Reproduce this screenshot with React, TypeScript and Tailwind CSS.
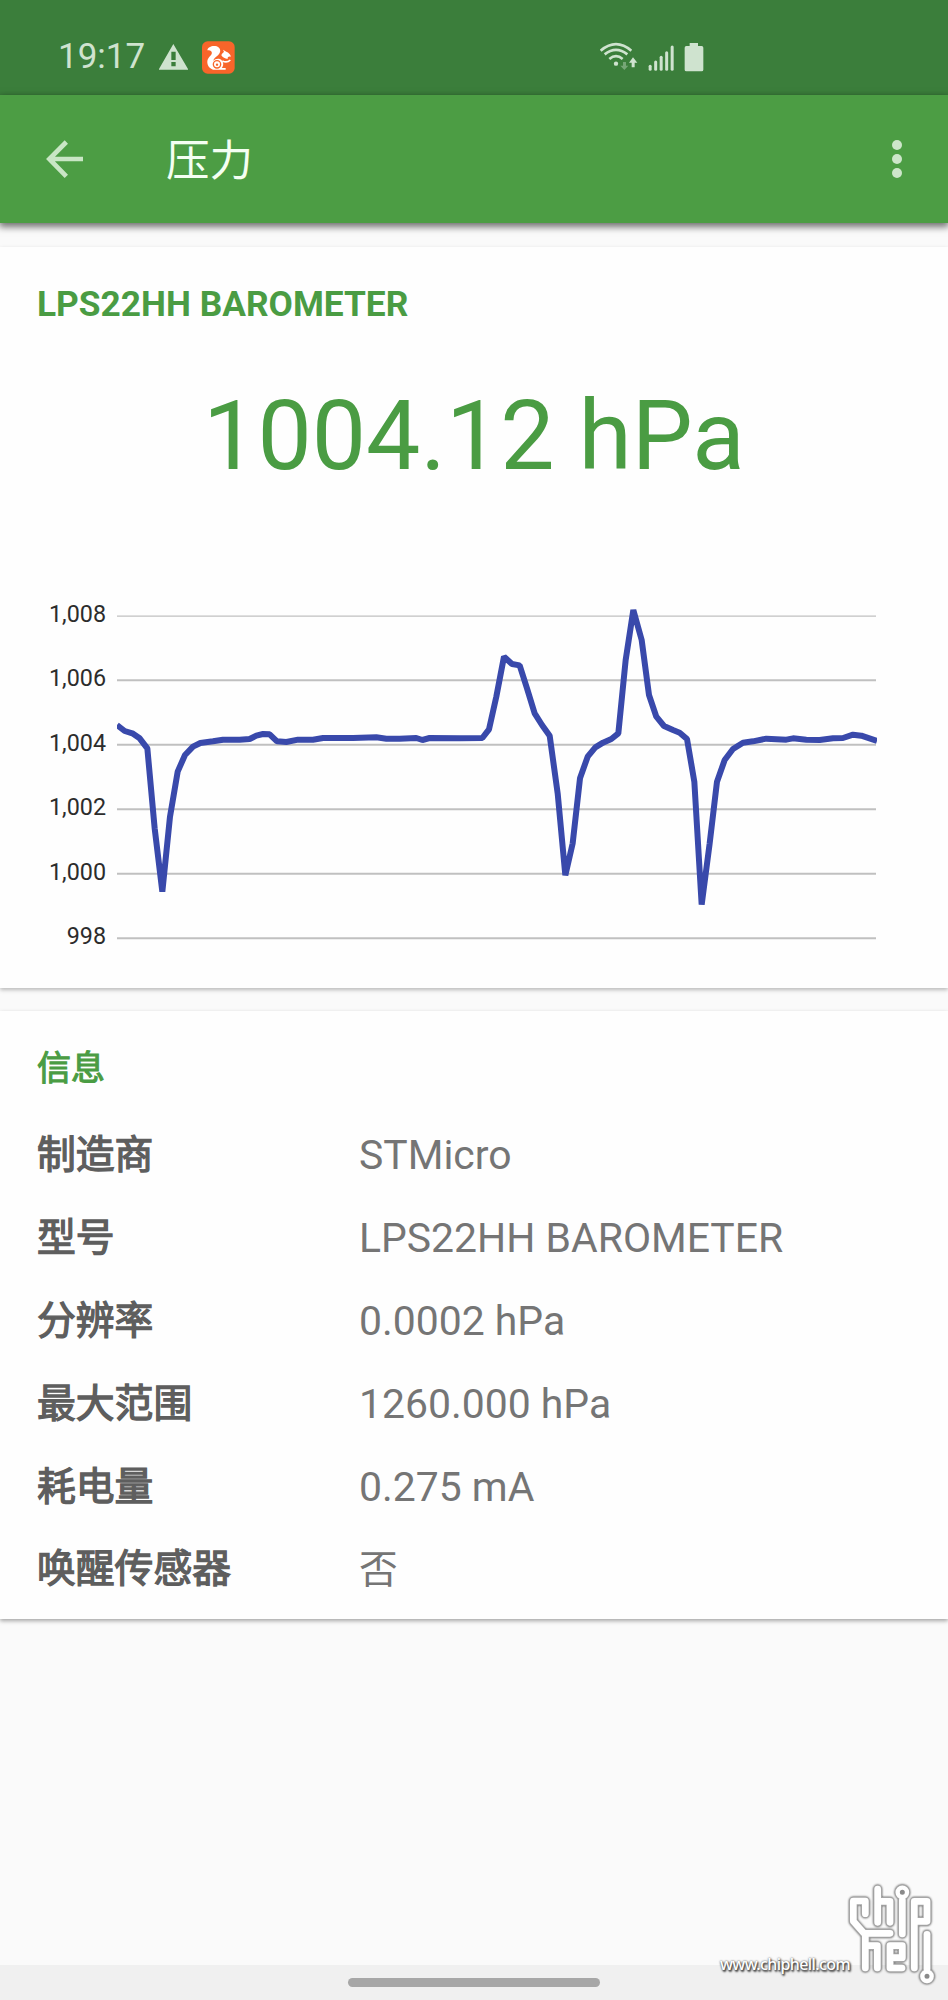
import React from "react";

const ticks = ["1,008", "1,006", "1,004", "1,002", "1,000", "998"];

const series =
  "352,435 375,453 398,460 420,475 443,505 465,745 488,935 511,710 534,575 556,525 580,500 602,489 640,484 670,479 720,479 750,477 770,467 790,462 810,463 832,484 860,486 895,479 940,479 970,474 1060,474 1130,472 1160,476 1200,476 1250,474 1268,480 1290,474 1380,475 1448,474 1468,448 1490,350 1513,230 1537,252 1560,256 1582,325 1605,400 1627,435 1650,467 1674,640 1697,886 1719,790 1741,595 1764,530 1787,502 1810,488 1835,477 1856,460 1878,240 1901,90 1926,180 1948,345 1970,410 1993,438 2020,450 2040,458 2062,477 2084,605 2106,974 2130,790 2152,605 2175,540 2200,507 2230,488 2260,484 2300,476 2360,479 2380,475 2420,479 2460,480 2500,475 2530,474 2560,464 2585,467 2632,483";

const info: [string, string][] = [
  ["制造商", "STMicro"],
  ["型号", "LPS22HH BAROMETER"],
  ["分辨率", "0.0002 hPa"],
  ["最大范围", "1260.000 hPa"],
  ["耗电量", "0.275 mA"],
  ["唤醒传感器", "否"],
];

function StatusBar() {
  return (
    <div className="flex h-[95px] shrink-0 items-center bg-[#3b7e3b] pt-[19px] pl-[58px] text-[#cfe3cf]">
      <span className="w-[101px] text-[35px] leading-[34px]">19:17</span>
      <svg className="h-[26px] w-[29px]" viewBox="478 131 87 78">
        <path
          fill="currentColor"
          fillRule="evenodd"
          d="M521 131 L566 208 H477 Z M515 154 V179 H528 V154 Z M515 185 V198 H528 V185 Z"
        />
      </svg>
      <svg className="ml-[14px] h-[33px] w-[33px]" viewBox="605 121 99 99">
        <rect x="605" y="122" width="98" height="97" rx="17" fill="#f8652a" />
        <path
          fill="#fff"
          d="M621 149 C622 138 638 133 649 137 C662 142 663 155 653 164 C645 171 640 174 639 181 C645 173 659 172 665 180 C671 187 669 197 664 202 H676 V207 H638 C627 204 620 193 621 182 C622 171 631 166 634 160 C637 152 629 148 621 149 Z"
        />
        <path fill="#fff" d="M663 164 C665 158 668 156 671 154 L668 147 L678 153 C685 155 690 161 692 168 C684 166 681 170 682 175 C674 173 667 171 663 164 Z" />
        <path fill="none" stroke="#fff" strokeWidth="5" d="M666 181 C674 185 684 184 690 178" />
        <circle cx="650" cy="191" r="11" fill="none" stroke="#f8652a" strokeWidth="4" />
        <circle cx="650" cy="192" r="3.5" fill="#f8652a" />
      </svg>
      <svg className="ml-[365px] h-[30px] w-[104px]" viewBox="120 124 312 90">
        <g fill="none" stroke="currentColor" strokeWidth="8">
          <path d="M122 150 Q168 111 214 150" />
          <path d="M134 161 Q168 134 202 161" />
          <path d="M148 175 Q168 158 188 175" />
        </g>
        <circle cx="168" cy="189" r="6.5" fill="currentColor" />
        <path fill="currentColor" opacity="0.4" d="M189 184 H198 V195 H205 L193 208 L181 195 H189 Z" />
        <path fill="currentColor" d="M219 170 L232 186 H224 V200 H215 V186 H207 Z" />
        <g stroke="currentColor" strokeWidth="9" strokeLinecap="round">
          <path d="M270.5 197 V206" />
          <path d="M287 184 V206" />
          <path d="M303.500 170 V206" />
          <path d="M320 156 V206" />
          <path d="M336.500 139 V206" />
        </g>
        <path
          fill="currentColor"
          d="M389 127 H414 V136 H425 Q430 136 430 141 V207 Q430 212 425 212 H379 Q374 212 374 207 V141 Q374 136 379 136 H389 Z"
        />
      </svg>
    </div>
  );
}

function AppBar() {
  return (
    <header className="relative z-10 flex h-[128px] shrink-0 items-center bg-[#4c9d44] pl-[46px] shadow-[0_3px_7px_1px_rgba(0,0,0,0.55)]">
      <svg className="h-[38px] w-[38px]" viewBox="138 421 114 114" fill="none" stroke="#c9e6c5" strokeWidth="14">
        <path d="M249 478 H148 M199 427 L148 478 L199 530" />
      </svg>
      <h1 className="mt-[5px] ml-[82px] flex-1 text-[43.500px] leading-[50px] font-normal text-[#f4fff2]">压力</h1>
      <div className="mr-[46px] flex flex-col gap-[4px]">
        <span className="h-[10px] w-[10px] rounded-full bg-[#cde6ca]" />
        <span className="h-[10px] w-[10px] rounded-full bg-[#cde6ca]" />
        <span className="h-[10px] w-[10px] rounded-full bg-[#cde6ca]" />
      </div>
    </header>
  );
}

function Chart() {
  return (
    <div className="mt-[106px] flex h-[370px]">
      <div className="-mt-[18px] w-[106px] text-right text-[23.300px] leading-[64.400px] text-[#2c2c2c]">
        {ticks.map((t) => (
          <div key={t} className="h-[64.400px]">
            {t}
          </div>
        ))}
      </div>
      <svg className="ml-[11.300px] h-[360px] w-[760px]" viewBox="352 60 2280 1080">
        <g stroke="#c0c0c0" strokeWidth="6">
          <path d="M352 108.500 H2629" strokeWidth="4" />
          <path d="M352 300.500 H2629" />
          <path d="M352 494 H2629" />
          <path d="M352 687.500 H2629" />
          <path d="M352 881 H2629" />
          <path d="M352 1074.500 H2629" />
        </g>
        <polyline points={series} fill="none" stroke="#3949ab" strokeWidth="18" strokeLinejoin="bevel" />
      </svg>
    </div>
  );
}

function Watermark() {
  return (
    <div className="absolute right-[13px] bottom-[11px] flex items-end">
      <span className="mb-[14px] font-['Noto_Sans',sans-serif] text-[16px] leading-[22px] font-medium tracking-[-0.6px] text-white [text-shadow:1px_1px_2px_#444,0_0_2px_#555,1px_2px_2px_#666]">
        www.chiphell.com
      </span>
      <svg
        className="-mr-[3px] ml-[-6px] h-[108px] w-[94px] drop-shadow-[0_0_1px_rgba(0,0,0,0.7)]"
        viewBox="434 36 282 324"
        fill="none"
        strokeLinejoin="round"
      >
        {[
          { color: "#a6a6a6", width: 26, ring: 19 },
          { color: "#ffffff", width: 20, ring: 13 },
        ].map((s) => (
          <g key={s.color} stroke={s.color} strokeWidth={s.width} strokeLinecap="round">
            <path d="M498 134 V96 H462 V157 L494 193 H572" />
            <path d="M498 193 V297 M498 230 H534 V297" />
            <path d="M535 60 V160 M535 97 H572 V160" />
            <path d="M609 94 V195" />
            <path d="M645 297 V97 H683 V157 H645" />
            <path d="M572 266 H609 V230 H572 V297 H608" />
            <path d="M683 196 V299" />
            <circle cx="609" cy="70" r="14" strokeWidth={s.ring} fill="#8a8a8a" />
            <circle cx="683" cy="322" r="14" strokeWidth={s.ring} fill="#8a8a8a" />
          </g>
        ))}
      </svg>
    </div>
  );
}

export default function App() {
  return (
    <div className="relative flex h-[2000px] w-[948px] flex-col overflow-hidden bg-[#fafafa] font-[Roboto,'Noto_Sans_CJK_SC',sans-serif]">
      <StatusBar />
      <AppBar />
      <section className="mt-[24px] h-[741px] shrink-0 bg-[#fefefe] shadow-[0_2px_4px_rgba(0,0,0,0.26)]">
        <h2 className="pt-[36px] pl-[37px] text-[35.300px] leading-[42px] font-bold text-[#4a9c43]">
          LPS22HH BAROMETER
        </h2>
        <p className="mt-[53px] text-center text-[96.700px] leading-[116px] text-[#4a9c43]">1004.12 hPa</p>
        <Chart />
      </section>
      <section className="mt-[23px] h-[608px] shrink-0 bg-[#fefefe] pl-[37px] shadow-[0_2px_4px_rgba(0,0,0,0.34)]">
        <h2 className="pt-[36px] text-[34px] leading-[42px] text-[#4a9c43] [-webkit-text-stroke:1.1px_#4a9c43]">信息</h2>
        <dl className="mt-[25px]">
          {info.map(([label, value]) => (
            <div key={label} className="flex h-[82.800px] items-center leading-[50px]">
              <dt className="w-[322px] text-[38.800px] text-[#5e5e5e] [-webkit-text-stroke:1.3px_#5e5e5e]">{label}</dt>
              <dd className={value === "否" ? "pt-[2px] text-[38.700px] text-[#757575]" : "text-[40.900px] text-[#757575]"}>
                {value}
              </dd>
            </div>
          ))}
        </dl>
      </section>
      <div className="flex-1" />
      <div className="flex h-[35px] shrink-0 justify-center bg-[#f0f0f0] pt-[13px]">
        <div className="h-[9px] w-[252px] rounded-full bg-[#a7a7a7]" />
      </div>
      <Watermark />
    </div>
  );
}
